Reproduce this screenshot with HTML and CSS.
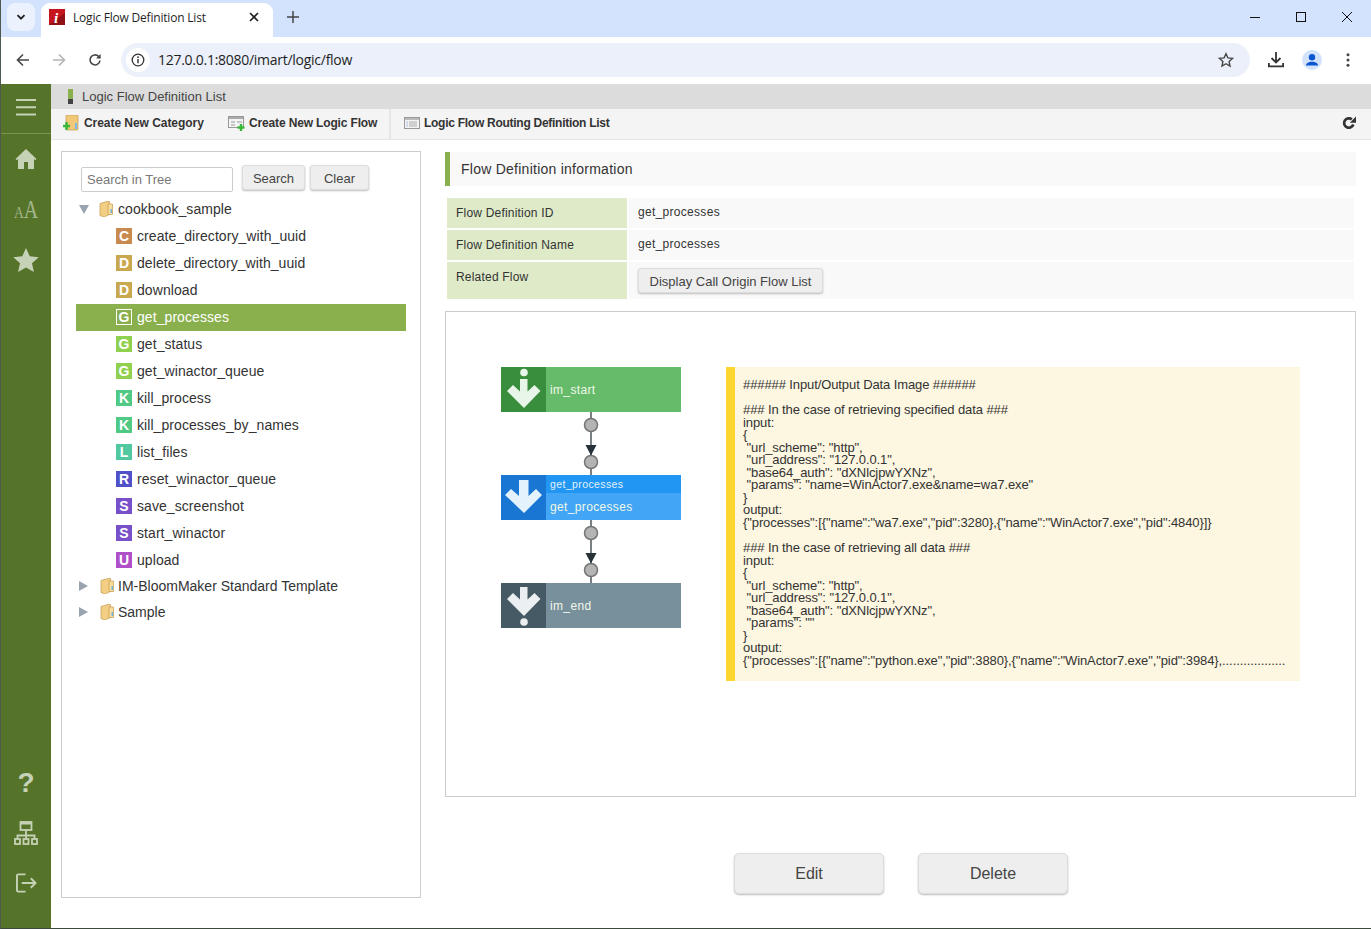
FILE: index.html
```html
<!DOCTYPE html>
<html lang="en">
<head>
<meta charset="utf-8">
<title>Logic Flow Definition List</title>
<link rel="stylesheet" href="styles.css">
</head>
<body>
<div class="window">
  <header class="tabstrip">
    <button class="tab-menu"><svg width="12" height="12" viewBox="0 0 12 12"><path d="M2.5 4.2 6 7.7l3.5-3.5" fill="none" stroke="#1f1f1f" stroke-width="1.8"/></svg></button>
    <div class="tab">
      <svg class="favicon" width="16" height="16" viewBox="0 0 16 16"><rect width="16" height="16" fill="#c4161c"/><path d="M0 16 16 4v12z" fill="#8f1015"/><text x="5" y="13.5" class="favicon-i">i</text></svg>
      <span class="tab-title">Logic Flow Definition List</span>
      <svg class="tab-close" width="10" height="10" viewBox="0 0 10 10"><path d="M1 1l8 8M9 1 1 9" stroke="#1f1f1f" stroke-width="1.6"/></svg>
    </div>
    <svg class="new-tab" width="12" height="12" viewBox="0 0 12 12"><path d="M6 0v12M0 6h12" stroke="#444" stroke-width="1.5"/></svg>
    <div class="win-controls">
      <svg width="12" height="12" viewBox="0 0 12 12"><path d="M1 6.5h10" stroke="#111" stroke-width="1"/></svg>
      <svg width="12" height="12" viewBox="0 0 12 12"><rect x="1.5" y="1.5" width="9" height="9" fill="none" stroke="#111"/></svg>
      <svg width="12" height="12" viewBox="0 0 12 12"><path d="M1 1l10 10M11 1 1 11" stroke="#111"/></svg>
    </div>
  </header>
  <nav class="addressbar">
    <svg class="nav-icon nav-back" width="14" height="14" viewBox="0 0 14 14"><path d="M13 7H2M7 1.500 1.500 7 7 12.500" fill="none" stroke="#474747" stroke-width="1.6"/></svg>
    <svg class="nav-icon nav-fwd" width="14" height="14" viewBox="0 0 14 14"><path d="M1 7h11M7 1.500 12.500 7 7 12.500" fill="none" stroke="#b5b5b5" stroke-width="1.6"/></svg>
    <svg class="nav-icon nav-reload" width="14" height="14" viewBox="0 0 14 14"><path d="M12 7.500A5 5 0 1 1 10.600 3.400L12 5" fill="none" stroke="#474747" stroke-width="1.6"/><path d="M12.600 1v4.600H8z" fill="#474747"/></svg>
    <div class="omnibox">
      <span class="site-info"><svg width="14" height="14" viewBox="0 0 14 14"><circle cx="7" cy="7" r="5.800" fill="none" stroke="#333" stroke-width="1.3"/><path d="M7 6v4.200" stroke="#333" stroke-width="1.4"/><circle cx="7" cy="4.200" r=".9" fill="#333"/></svg></span>
      <span class="url">127.0.0.1:8080/imart/logic/flow</span>
      <svg class="bookmark" width="16" height="16" viewBox="0 0 16 16"><path d="M8 1.700l1.900 4.200 4.600.5-3.400 3.100.9 4.500L8 11.700l-4 2.300.9-4.500L1.500 6.400l4.600-.5z" fill="none" stroke="#474747" stroke-width="1.4"/></svg>
    </div>
    <svg class="act-download" width="16" height="16" viewBox="0 0 16 16"><path d="M8 0v10M3.500 6 8 10.500 12.500 6" fill="none" stroke="#333" stroke-width="1.8"/><path d="M.9 11v3.300h14.200V11" fill="none" stroke="#333" stroke-width="1.8"/></svg>
    <svg class="act-avatar" width="20" height="20" viewBox="0 0 20 20"><circle cx="10" cy="10" r="10" fill="#d3e3fd"/><circle cx="10" cy="7.200" r="3.200" fill="#0b57d0"/><path d="M4 15.500c0-2.600 3-3.700 6-3.700s6 1.100 6 3.700z" fill="#0b57d0"/></svg>
    <svg class="act-menu" width="4" height="14" viewBox="0 0 4 14"><circle cx="2" cy="1.800" r="1.500" fill="#444"/><circle cx="2" cy="7" r="1.500" fill="#444"/><circle cx="2" cy="12.200" r="1.500" fill="#444"/></svg>
  </nav>
  <div class="app">
    <aside class="sidebar">
      <div class="side-burger"><svg width="20" height="17" viewBox="0 0 20 17"><path d="M0 1h20M0 8.200h20M0 15.500h20" stroke="#c6d2b6" stroke-width="2"/></svg></div>
      <div class="side-top">
        <svg class="side-home" width="22" height="22" viewBox="0 0 22 22"><path d="M11 1 .5 11l1.200 1.200L3 11v10h6v-7h4v7h6V11l1.300 1.200 1.200-1.200z" fill="#c6d2b6"/></svg>
        <span class="side-aa"><span class="aa-small">A</span><span class="aa-big">A</span></span>
        <svg width="26" height="24" viewBox="0 0 26 24"><path d="M13 0l3.700 8.200 9 1-6.700 6 1.900 8.800L13 19.500 5.100 24 7 15.200l-6.700-6 9-1z" fill="#c6d2b6"/></svg>
      </div>
      <div class="side-bottom">
        <span class="side-help">?</span>
        <svg class="side-map" width="24" height="24" viewBox="0 0 24 24"><g fill="none" stroke="#c6d2b6" stroke-width="1.8"><rect x="6.500" y="1" width="11" height="8"/><path d="M12 9v5M3.500 18v-3.500h17V18M12 14v4"/><rect x="1" y="18" width="5" height="5"/><rect x="9.500" y="18" width="5" height="5"/><rect x="18" y="18" width="5" height="5"/></g><rect x="6.500" y="1" width="11" height="2.500" fill="#c6d2b6"/></svg>
        <svg width="21" height="20" viewBox="0 0 22 20"><path d="M10 1H2.500A1.500 1.500 0 0 0 1 2.500v15A1.500 1.500 0 0 0 2.500 19H10M6 10h14M15.500 5l5 5-5 5" fill="none" stroke="#c6d2b6" stroke-width="2"/></svg>
      </div>
    </aside>
    <main class="content">
      <div class="titlebar"><span class="title-mark"></span><span>Logic Flow Definition List</span></div>
      <div class="toolbar">
        <a class="tool tool-first">
          <svg width="16" height="16" viewBox="0 0 16 16"><rect x="3" y="0" width="12" height="15" rx="1" fill="#f0c878" stroke="#b8914a" stroke-width=".6"/><rect x="12" y="8" width="2" height="6" fill="#7cb9e8"/><path d="M3.500 7v8M0 11h7" stroke="#38b838" stroke-width="2.400"/></svg>
          Create New Category
        </a>
        <a class="tool tool-second">
          <svg width="18" height="16" viewBox="0 0 18 16"><rect x=".5" y="1.500" width="15" height="11" fill="#f4f4f4" stroke="#999"/><rect x="1" y="2" width="14" height="2" fill="#aaa"/><path d="M3 7h4M9 7h5M3 10h4" stroke="#999"/><path d="M13 9v7M9.500 12.500h7" stroke="#38b838" stroke-width="2.400"/></svg>
          Create New Logic Flow
        </a>
        <a class="tool tool-third">
          <svg width="16" height="14" viewBox="0 0 16 14"><rect x=".5" y="1.500" width="15" height="11" fill="#f4f4f4" stroke="#999"/><rect x="1" y="2" width="14" height="2" fill="#bbb"/><path d="M5 6h8M5 8h8M5 10h8" stroke="#aaa"/><path d="M2.500 6h1M2.500 8h1M2.500 10h1" stroke="#6a8fc9"/></svg>
          Logic Flow Routing Definition List
        </a>
        <svg class="tool-refresh" width="14" height="14" viewBox="0 0 14 14"><path d="M11.300 8.500A4.700 4.700 0 1 1 9.800 3.400" fill="none" stroke="#333" stroke-width="2.700"/><path d="M14 .6v6.200H7.800z" fill="#333"/></svg>
      </div>
      <div class="workspace">
        <section class="tree-panel">
          <div class="tree-search">
            <input class="tree-input" type="text" placeholder="Search in Tree">
            <button class="btn btn-search">Search</button>
            <button class="btn btn-clear">Clear</button>
          </div>
          <div class="folder"><span class="tri-down"></span><svg class="folder-ico" width="14" height="16" viewBox="0 0 14 16"><use href="#fld"/></svg><span>cookbook_sample</span></div>
          <ul class="leaves">
            <li><b class="badge c-c">C</b>create_directory_with_uuid</li>
            <li><b class="badge c-d">D</b>delete_directory_with_uuid</li>
            <li><b class="badge c-d">D</b>download</li>
            <li class="selected"><b class="badge c-sel">G</b>get_processes</li>
            <li><b class="badge c-g">G</b>get_status</li>
            <li><b class="badge c-g">G</b>get_winactor_queue</li>
            <li><b class="badge c-k">K</b>kill_process</li>
            <li><b class="badge c-k">K</b>kill_processes_by_names</li>
            <li><b class="badge c-l">L</b>list_files</li>
            <li><b class="badge c-r">R</b>reset_winactor_queue</li>
            <li><b class="badge c-s">S</b>save_screenshot</li>
            <li><b class="badge c-s">S</b>start_winactor</li>
            <li><b class="badge c-u">U</b>upload</li>
          </ul>
          <div class="folder folder-closed"><span class="tri-right"></span><svg class="folder-ico" width="14" height="16" viewBox="0 0 14 16"><use href="#fld"/></svg><span class="folder-name">IM-BloomMaker Standard Template</span></div>
          <div class="folder folder-closed"><span class="tri-right"></span><svg class="folder-ico" width="14" height="16" viewBox="0 0 14 16"><use href="#fld"/></svg><span class="folder-name">Sample</span></div>
        </section>
        <section class="detail">
          <h2 class="section-head">Flow Definition information</h2>
          <div class="info-grid">
            <div class="info-label">Flow Definition ID</div><div class="info-value">get_processes</div>
            <div class="info-label">Flow Definition Name</div><div class="info-value">get_processes</div>
            <div class="info-label info-label-top">Related Flow</div><div class="info-value"><button class="btn btn-origin">Display Call Origin Flow List</button></div>
          </div>
          <div class="canvas">
            <svg class="flow" width="180" height="262" viewBox="0 0 180 262">
              <path d="M90 45v171" stroke="#2f3b40" stroke-width="1.300"/>
              <g fill="#b4b4b4" stroke="#757575" stroke-width="1.500"><circle cx="90" cy="58" r="6.500"/><circle cx="90" cy="95" r="6.500"/><circle cx="90" cy="166" r="6.500"/><circle cx="90" cy="203" r="6.500"/></g>
              <path d="M84.500 78h11L90 88.500zM84.500 186h11L90 196.500z" fill="#263238"/>
              <rect width="180" height="45" fill="#66bb6a"/><rect width="45" height="45" fill="#388e3c"/>
              <circle cx="23" cy="5.500" r="3.800" fill="#e8f5e9"/><path d="M19 12h7.500v12.500l7-6.500 6 6L23 41 6 24l6-6 7 6.500z" fill="#e8f5e9"/>
              <text x="49" y="26.500" class="n-text">im_start</text>
              <g transform="translate(0 108)">
                <rect width="180" height="45" fill="#42a5f5"/><rect width="180" height="18" fill="#2196f3"/><rect width="45" height="45" fill="#1976d2"/>
                <path d="M18 5h9.500v16l7.500-7 6 6-18 18L4 20l6-6 8 7z" fill="#e3f2fd"/>
                <text x="49" y="13" class="n-text-sm">get_processes</text>
                <text x="49" y="36" class="n-text">get_processes</text>
              </g>
              <g transform="translate(0 216)">
                <rect width="180" height="45" fill="#78909c"/><rect width="45" height="45" fill="#455a64"/>
                <path d="M19 4h7.500v12.500l7-6.500 6 6L23 33 6 16l6-6 7 6.500z" fill="#eceff1"/><circle cx="23" cy="39" r="3.800" fill="#eceff1"/>
                <text x="49" y="26.500" class="n-text">im_end</text>
              </g>
            </svg>
            <pre class="note">###### Input/Output Data Image ######

### In the case of retrieving specified data ###
input:
{
 "url_scheme": "http",
 "url_address": "127.0.0.1",
 "base64_auth": "dXNlcjpwYXNz",
 "params": "name=WinActor7.exe&amp;name=wa7.exe"
}
output:
{"processes":[{"name":"wa7.exe","pid":3280},{"name":"WinActor7.exe","pid":4840}]}

### In the case of retrieving all data ###
input:
{
 "url_scheme": "http",
 "url_address": "127.0.0.1",
 "base64_auth": "dXNlcjpwYXNz",
 "params": ""
}
output:
{"processes":[{"name":"python.exe","pid":3880},{"name":"WinActor7.exe","pid":3984},..................</pre>
          </div>
          <div class="actions">
            <button class="btn btn-big">Edit</button>
            <button class="btn btn-big">Delete</button>
          </div>
        </section>
      </div>
    </main>
  </div>
</div>
<svg class="defs" width="0" height="0"><defs><g id="fld"><path d="M1 2.500 8 .5h2.500v13L5 16l-4-1.500z" fill="#f2cf85" stroke="#c49a4e" stroke-width=".7"/><path d="M9 3h4.500v10.500H9z" fill="#f7dc9c" stroke="#c49a4e" stroke-width=".7"/><path d="M11.500 8h1.500v4h-1.500z" fill="#6fb6dc"/></g></defs></svg>
</body>
</html>
```
FILE: styles.css
```css
* { box-sizing: border-box; }
html, body { margin: 0; padding: 0; height: 100%; overflow: hidden; }
body { font-family: "Liberation Sans", Arial, sans-serif; background: #fff; color: #333; }
.defs { position: absolute; }
.window { width: 1371px; height: 929px; display: flex; flex-direction: column; border-left: 1px solid #4e5a50; border-bottom: 1px solid #3c4a3c; }
button { font-family: inherit; }

.tabstrip { height: 37px; flex: none; background: #d3e3fd; display: flex; align-items: flex-start; padding: 3px 0 0 6px; }
.tab-menu { width: 28px; height: 28px; margin-right: 6px; border: 0; padding: 0; border-radius: 8px; background: #ecf2fd; display: flex; align-items: center; justify-content: center; }
.tab { width: 232px; height: 34px; background: #fff; border-radius: 9px 9px 0 0; display: flex; align-items: center; padding: 0 14px 6px 8px; margin-right: 14px; }
.favicon { flex: none; margin-right: 8px; }
.favicon-i { font: italic bold 15px "Liberation Serif", serif; fill: #fff; }
.tab-title { flex: 1; font: 12px "Open Sans", sans-serif; color: #1f1f1f; white-space: nowrap; letter-spacing: -.2px; }
.tab-close { flex: none; }
.new-tab { margin-top: 8px; }
.win-controls { margin-left: auto; display: flex; gap: 34px; padding: 8px 18px 0 0; }

.addressbar { height: 47px; flex: none; background: #fff; display: flex; align-items: center; padding: 0 16px 1px 15px; }
.nav-icon { flex: none; margin-right: 22px; }
.nav-reload { margin-right: 19px; }
.omnibox { width: 1129px; height: 34px; border-radius: 17px; background: #ebf0fa; display: flex; align-items: center; padding: 0 16px 0 5px; }
.site-info { width: 24px; height: 24px; border-radius: 50%; background: #fff; display: flex; align-items: center; justify-content: center; margin-right: 8px; }
.url { flex: 1; font: 14px "Open Sans", sans-serif; color: #1f1f1f; letter-spacing: -.27px; margin-top: -2px; }
.act-download { margin-left: 18px; flex: none; }
.act-avatar { margin-left: 18px; flex: none; }
.act-menu { margin-left: 24px; flex: none; }

.app { flex: 1; display: flex; min-height: 0; }
.sidebar { width: 50px; flex: none; background: #56732a; display: flex; flex-direction: column; align-items: center; }
.side-burger { width: 100%; height: 50px; border-bottom: 1px solid #7a9355; display: flex; align-items: center; justify-content: center; padding-bottom: 2px; }
.side-top { display: flex; flex-direction: column; align-items: center; padding-top: 14px; }
.side-home { margin-bottom: 28px; }
.side-aa { height: 24px; font-family: "Liberation Serif", serif; color: #a3b58a; display: flex; align-items: baseline; line-height: 24px; margin: 0 0 26px; transform: scaleX(.8); }
.aa-small { font-size: 17px; }
.aa-big { font-size: 25px; }
.side-bottom { margin-top: auto; display: flex; flex-direction: column; align-items: center; padding-bottom: 35px; }
.side-help { font-size: 28px; font-weight: bold; line-height: 32px; color: #c6d2b6; height: 30px; margin-bottom: 24px; }
.side-map { margin-bottom: 28px; }

.content { flex: 1; min-width: 0; display: flex; flex-direction: column; }
.titlebar { height: 25px; flex: none; background: #dcdcdc; display: flex; align-items: center; padding-left: 17px; font-size: 13px; color: #444; }
.title-mark { width: 5px; height: 15px; background: linear-gradient(#8ab04d 0 10px, #444 10px); margin-right: 9px; }
.toolbar { height: 31px; flex: none; background: #f4f4f4; border-bottom: 1px solid #e6e6e6; display: flex; align-items: center; font-size: 12px; font-weight: bold; color: #333; padding: 0 15px 2px 0; }
.tool { display: flex; align-items: center; gap: 5px; height: 100%; white-space: nowrap; }
.tool-first { padding-left: 12px; width: 177px; letter-spacing: -.05px; }
.tool-second { width: 163px; gap: 3px; position: relative; letter-spacing: -.15px; }
.tool-second::after { content: ""; position: absolute; right: 0; top: 0; bottom: -2px; width: 2px; background: #e6e6e6; }
.tool-third { padding-left: 13px; gap: 4px; letter-spacing: -.27px; }
.tool-refresh { margin-left: auto; }

.workspace { flex: 1; min-height: 0; display: flex; padding: 11px 15px 30px 10px; gap: 24px; }
.tree-panel { width: 360px; flex: none; border: 1px solid #ccc; padding: 13px 14px 0 14px; font-size: 14px; color: #333; letter-spacing: .07px; }
.tree-search { display: flex; align-items: flex-start; padding-left: 5px; height: 31px; }
.tree-input { width: 152px; height: 25px; margin: 2px 9px 0 0; border: 1px solid #ccc; border-radius: 2px; padding: 0 5px; font: 13px "Liberation Sans", sans-serif; }
.tree-input::placeholder { color: #777; opacity: 1; }
.btn { border: 1px solid #ddd; border-radius: 3px; background: #eee; color: #444; box-shadow: 0 1px 2px #bbb; padding: 1px 0 0; font-size: 13px; }
.btn-search { width: 63px; height: 25px; margin-right: 5px; }
.btn-clear { width: 59px; height: 25px; }
.folder { height: 26px; display: flex; align-items: center; }
.folder-closed { letter-spacing: 0; }
.folder-name { margin-left: -1px; }
.tri-down { width: 0; height: 0; border: 5.5px solid transparent; border-top: 9px solid #9aa3b0; border-bottom: 0; margin: 0 10px 0 3px; }
.tri-right { width: 0; height: 0; border: 5.5px solid transparent; border-left: 9px solid #9aa3b0; border-right: 0; margin: 0 12px 0 3px; }
.folder-ico { margin-right: 5px; flex: none; }
.leaves { list-style: none; margin: 1px 0 -1px; padding: 0; }
.leaves li { height: 27px; display: flex; align-items: center; padding: 0 0 2px 40px; white-space: nowrap; }
.leaves li.selected { background: #8ab04d; color: #fff; }
.badge { width: 16px; height: 16px; flex: none; margin: 1px 5px 0 0; color: #fff; font-size: 14px; line-height: 16px; text-align: center; letter-spacing: 0; }
.c-c { background: #c98a50; } .c-d { background: #c9a850; } .c-g { background: #8fd04f; }
.c-k { background: #50c985; } .c-l { background: #50c9a0; } .c-r { background: #5050c9; }
.c-s { background: #7850c9; } .c-u { background: #b050c9; }
.c-sel { background: #8ab04d; border: 1px solid #fff; line-height: 14px; }

.detail { flex: 1; min-width: 0; display: flex; flex-direction: column; }
.section-head { height: 34px; flex: none; margin: 1px 0 0; background: #f9f9f9; border-left: 5px solid #8ab04d; padding-left: 11px; font-size: 14px; font-weight: normal; line-height: 34px; letter-spacing: .25px; color: #333; }
.info-grid { flex: none; margin: 12px 2px 0; display: grid; grid-template-columns: 180px 1fr; grid-template-rows: 30px 30px 37px; gap: 2px; font-size: 12px; color: #333; }
.info-label { background: #deeac8; padding-left: 9px; display: flex; align-items: center; letter-spacing: .2px; }
.info-label-top { align-items: flex-start; padding-top: 8px; }
.info-value { background: #f9f9f9; padding-left: 9px; display: flex; align-items: center; padding-bottom: 3px; letter-spacing: .3px; }
.info-value:last-child { padding-bottom: 0; }
.btn-origin { width: 185px; height: 25px; font-size: 13px; }
.canvas { height: 486px; flex: none; margin-top: 12px; border: 1px solid #ccc; display: flex; align-items: flex-start; gap: 45px; padding: 55px 55px 0; }
.flow { flex: none; display: block; }
.n-text { font: 12px "Liberation Sans", sans-serif; fill: #f1f8e9; letter-spacing: .35px; }
.n-text-sm { font: 10.5px "Liberation Sans", sans-serif; fill: #e3f2fd; letter-spacing: .4px; }
.note { width: 574px; height: 314px; flex: none; margin: 0; background: #fdf6e0; border-left: 9px solid #ffd530; padding: 12px 0 0 8px; font: 13px/12.55px "Liberation Sans", sans-serif; letter-spacing: -.1px; color: #333; white-space: pre; overflow: hidden; }
.actions { display: flex; justify-content: center; gap: 34px; margin-top: 56px; padding-left: 1px; }
.btn-big { width: 150px; height: 41px; font-size: 16px; border-radius: 5px; }
```
